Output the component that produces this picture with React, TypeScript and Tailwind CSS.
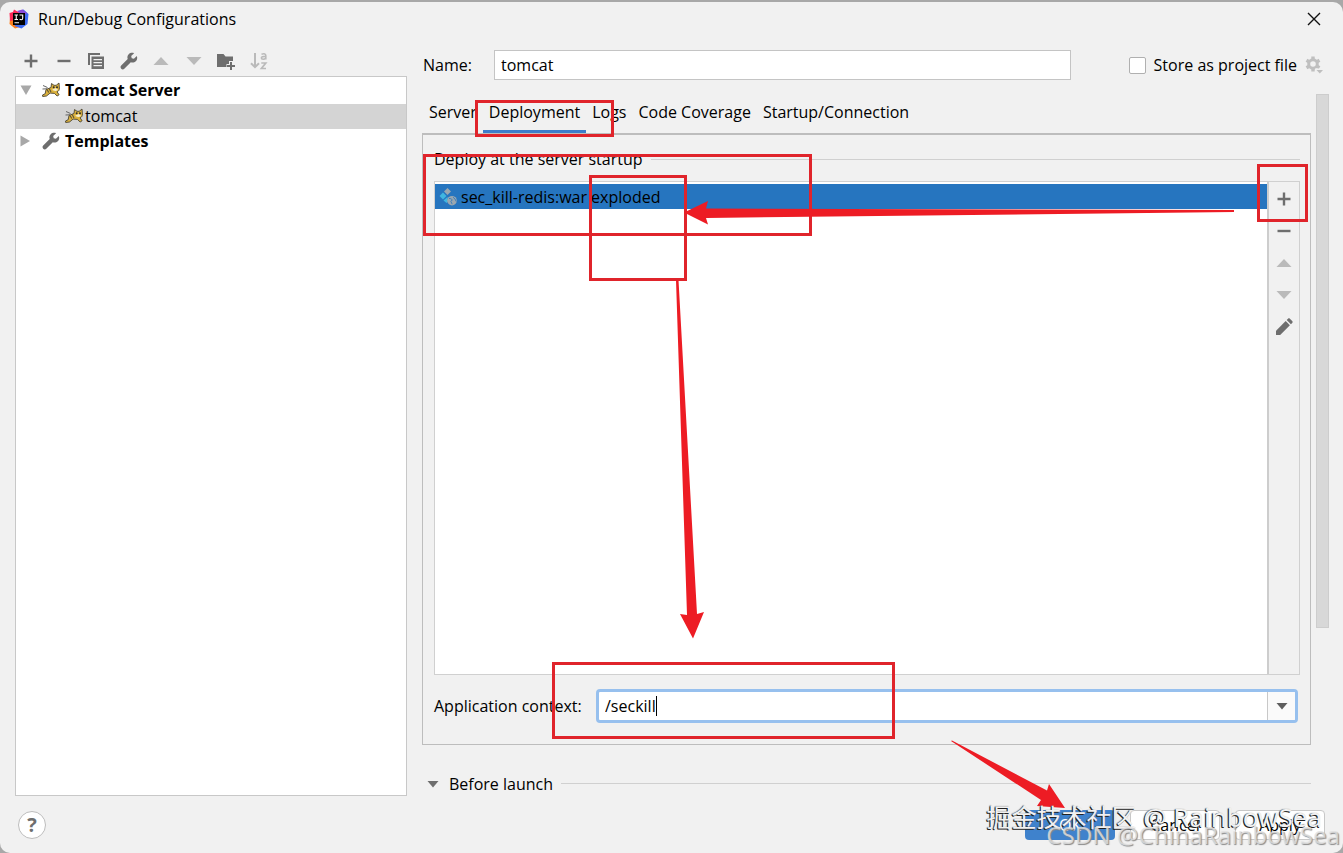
import type { ReactNode } from "react";

const font = "font-['Open_Sans','Noto_Sans_CJK_SC',sans-serif]";

interface IconProps {
  className?: string;
}

function PlusIcon() {
  return (
    <svg width="16" height="16" viewBox="0 0 16 16" className="text-[#6e6e6e]">
      <path d="M8 1.500v13M1.500 8h13" stroke="currentColor" strokeWidth="2.4" />
    </svg>
  );
}

function MinusIcon() {
  return (
    <svg width="16" height="16" viewBox="0 0 16 16" className="text-[#6e6e6e]">
      <path d="M1.500 8h13" stroke="currentColor" strokeWidth="2.4" />
    </svg>
  );
}

function CopyIcon() {
  return (
    <svg width="18" height="18" viewBox="0 0 18 18" fill="#6e6e6e">
      <path d="M1 1h12v2H3v10H1z" />
      <path fillRule="evenodd" d="M4.500 4.500H17V17H4.500zM6.500 7v1.300h8.500V7zm0 3v1.300h8.500V10zm0 3v1.300h8.500V13z" />
    </svg>
  );
}

function WrenchIcon() {
  return (
    <svg width="18" height="18" viewBox="0 0 18 18">
      <path
        fill="#6e6e6e"
        d="M16.800 3.900 13.900 6.800 11.700 6.300 11.200 4.100 14.100 1.200C12.300.400 10.100.800 8.700 2.200 7.400 3.500 7.100 5.400 7.700 7.100L1.200 13.600C.300 14.500.300 15.800 1.200 16.700 2.100 17.600 3.500 17.600 4.300 16.700L10.800 10.200C12.500 10.900 14.500 10.600 15.800 9.200 17.200 7.900 17.600 5.700 16.800 3.900Z"
      />
    </svg>
  );
}

function UpIcon() {
  return (
    <svg width="16" height="16" viewBox="0 0 16 16">
      <path d="M8 4l7.500 8H.500z" fill="#bababa" />
    </svg>
  );
}

function DownIcon() {
  return (
    <svg width="16" height="16" viewBox="0 0 16 16">
      <path d="M8 12 .500 4h15z" fill="#bababa" />
    </svg>
  );
}

function FolderAddIcon() {
  return (
    <svg width="20" height="18" viewBox="0 0 20 18" fill="#6e6e6e">
      <path d="M1 2h6.500L9.500 4.500H17V9h-4v3h-2.500v3H1z" />
      <path d="M14 10h2v3h3v2h-3v3h-2v-3h-3v-2h3z" />
    </svg>
  );
}

function SortIcon() {
  return (
    <svg width="18" height="18" viewBox="0 0 18 18" fill="none" stroke="#bababa" strokeWidth="2">
      <path d="M5 1v14M1 11.200l4 4 4-4" />
      <path d="M11.500 2.200c3-.9 4.300-.2 4.300 1.500V7.500M15.800 4.400c-3-.1-4.400.3-4.400 1.600 0 1.600 3 1.700 4.400 0" strokeWidth="1.600" />
      <path d="M11.300 11h4.500l-4.400 5.500H16" strokeWidth="1.700" />
    </svg>
  );
}

function PencilIcon() {
  return (
    <svg width="18" height="18" viewBox="0 0 18 18" fill="#6e6e6e">
      <path d="M1 17v-4.200L10.700 3.100l4.200 4.200L5.200 17z" />
      <path d="M11.700 2.100 13 .800c.6-.6 1.300-.6 1.900 0l2.300 2.300c.6.600.6 1.300 0 1.900l-1.300 1.300z" />
    </svg>
  );
}

function GearIcon() {
  return (
    <svg width="18" height="18" viewBox="0 0 18 18">
      <circle cx="8" cy="8" r="4.300" fill="none" stroke="#bfbfbf" strokeWidth="3" />
      <path
        d="M8 .500v3M8 12.500v3M1.500 4.250l2.600 1.500M11.900 10.250l2.600 1.500M1.500 11.750l2.600-1.500M11.900 5.750l2.600-1.500"
        stroke="#bfbfbf"
        strokeWidth="3.4"
      />
      <path d="M10 12.500h8v2l-3.500 3.500-4.500-3.500z" fill="#f1f1f1" />
      <path d="M11.500 14H18l-3.200 3.500z" fill="#bfbfbf" />
    </svg>
  );
}

function TomcatIcon() {
  return (
    <svg width="18" height="16" viewBox="0 0 18 16">
      <path d="M1 3.500 5.500 5.500M.500 7 5 6.800" stroke="#666" strokeWidth="1" />
      <path
        d="M4 7.500 9 5.500 9.500 1.500 12 3.300h2.200L17 1l.4 5c.1 2-.9 3.300-2.300 3.800l2 3-2 1.200-2.700-2.600-4.300-.3-3.600 2.900L.700 14.500.500 13l2.700-1.300z"
        fill="#dcb23c"
        stroke="#4b4433"
        strokeWidth=".9"
      />
      <path d="M10.300 7.500c1 1.800 4 2 5.700.2l-2-1.700z" fill="#f5ecc8" />
      <path d="M5 7.500 6.800 10.500M7.200 6.500 9 10" stroke="#5b5136" strokeWidth="1.100" />
      <circle cx="11.700" cy="5.300" r="1" fill="#2b2b2b" />
      <circle cx="15" cy="5.300" r="1" fill="#2b2b2b" />
    </svg>
  );
}

function ArtifactIcon() {
  return (
    <svg width="18" height="18" viewBox="0 0 18 18">
      <path d="M8.500 0 12 3.500 8.500 7 5 3.500z" fill="#9aa7b0" />
      <path d="M4 4.500 7.500 8 4 11.500.500 8z" fill="#40b6e0" />
      <path d="M8.500 9 9 13.500 7.500 15 4.500 12.500z" fill="#40b6e0" />
      <circle cx="13" cy="12.700" r="4.800" fill="#9aa7b0" />
      <path d="M10 10.500c1.800-.2 2.200.6 3.300 1.300l-1.400 1.600 1.300 2.800M14 9.200l2 1.800 1.200 2.500" fill="none" stroke="#2675bf" strokeWidth=".8" />
    </svg>
  );
}

function IdeaLogo() {
  return (
    <svg width="20" height="20" viewBox="0 0 20 20">
      <path d="M1 9 8 8l3 10-5 1.500L.500 15z" fill="#fc801d" />
      <path d="M.500 4 4 3l1-2.500 6 3.500-5 7-5 1z" fill="#fe2857" />
      <path d="M10 2 14.500.500 19.500 5l-1 10-6 4.500-7-2.500L12 8z" fill="#3d6bf2" />
      <path d="M8 2 13.500.500 18 4l-4 3z" fill="#8a4bd8" />
      <rect x="4" y="4" width="12" height="12" fill="#000" />
      <path d="M5.500 6h3.500M7.250 6v4.500M5.500 10.500h3.500M10.500 6h3.200v3.300c0 1-.6 1.400-1.400 1.400-.8 0-1.300-.2-1.700-.6M5.500 13.800h4.500" fill="none" stroke="#fff" strokeWidth="1.100" />
    </svg>
  );
}

function Caret({ className = "" }: IconProps) {
  return (
    <svg width="12" height="8" viewBox="0 0 12 8" className={className}>
      <path d="M.500 1h11L6 7.500z" fill="currentColor" />
    </svg>
  );
}

function TreeCaret({ className = "" }: IconProps) {
  return (
    <svg width="12" height="12" viewBox="0 0 12 12" className={className}>
      <path d="M.500 1.500h11L6 11z" fill="#a8a8a8" />
    </svg>
  );
}

interface ToolButtonProps {
  label: string;
  disabled?: boolean;
  children: ReactNode;
}

function ToolButton({ label, disabled, children }: ToolButtonProps) {
  return (
    <button
      type="button"
      aria-label={label}
      disabled={disabled}
      className="flex h-8 w-8 items-center justify-center"
    >
      {children}
    </button>
  );
}

function Sidebar() {
  return (
    <aside className="flex w-[392px] shrink-0 flex-col">
      <div className="flex h-8 items-center justify-between pt-0.5 pr-[132px]">
        <ToolButton label="Add"><PlusIcon /></ToolButton>
        <ToolButton label="Remove"><MinusIcon /></ToolButton>
        <ToolButton label="Copy"><CopyIcon /></ToolButton>
        <ToolButton label="Edit templates"><WrenchIcon /></ToolButton>
        <ToolButton label="Move up" disabled><UpIcon /></ToolButton>
        <ToolButton label="Move down" disabled><DownIcon /></ToolButton>
        <ToolButton label="Create folder"><FolderAddIcon /></ToolButton>
        <ToolButton label="Sort" disabled><SortIcon /></ToolButton>
      </div>

      <ul className="flex-1 border border-[#c8c8c8] bg-white pt-px leading-[22px]">
        <li className="flex h-[26px] items-center pb-0.5 pl-1 font-bold">
          <TreeCaret />
          <span className="w-2.5" />
          <TomcatIcon />
          <span className="pl-[5px]">Tomcat Server</span>
        </li>
        <li className="flex h-[25px] items-center bg-[#d4d4d4] pb-0.5 pl-[49px]">
          <TomcatIcon />
          <span className="pl-0.5">tomcat</span>
        </li>
        <li className="flex h-[25px] items-center pb-0.5 pl-[3px] font-bold">
          <TreeCaret className="-rotate-90" />
          <span className="w-[11px]" />
          <WrenchIcon />
          <span className="pl-[5px]">Templates</span>
        </li>
      </ul>
    </aside>
  );
}

const tabs = ["Server", "Deployment", "Logs", "Code Coverage", "Startup/Connection"];

function Tabs() {
  return (
    <div role="tablist" className="flex h-[39px] items-stretch pl-px">
      {tabs.map((tab) => (
        <button
          key={tab}
          type="button"
          role="tab"
          aria-selected={tab === "Deployment"}
          className={
            tab === "Deployment"
              ? "border-b-3 border-[#3d7dcb] px-1.5"
              : "border-b-3 border-transparent px-1.5"
          }
        >
          {tab}
        </button>
      ))}
    </div>
  );
}

function DeploymentPanel() {
  return (
    <section className="flex flex-1 flex-col border border-t-2 border-[#bdbdbd] pt-3 pr-2.5 pb-[21px] pl-[11px]">
      <div className="flex items-center gap-2">
        <h2>Deploy at the server startup</h2>
        <span className="h-px flex-1 bg-[#d0d0d0]" />
      </div>

      <div className="mt-2.5 flex flex-1 border border-[#d0d0d0]">
        <ul className="flex-1 border-r-2 border-[#cdcdcd] bg-white pt-0.5">
          <li className="flex h-[25px] items-center gap-1 bg-[#2675bf] pl-1">
            <ArtifactIcon />
            <span>sec_kill-redis:war exploded</span>
          </li>
        </ul>
        <div className="flex w-[30px] flex-col items-center pt-px">
          <ToolButton label="Add artifact"><PlusIcon /></ToolButton>
          <ToolButton label="Remove artifact"><MinusIcon /></ToolButton>
          <ToolButton label="Move artifact up" disabled><UpIcon /></ToolButton>
          <ToolButton label="Move artifact down" disabled><DownIcon /></ToolButton>
          <ToolButton label="Edit artifact"><PencilIcon /></ToolButton>
        </div>
      </div>

      <div className="mt-3.5 flex items-center">
        <label htmlFor="context" className="w-[162px]">Application context:</label>
        <div className="mr-0.5 flex h-[34px] flex-1 items-stretch overflow-hidden rounded border-3 border-[#97c0ee] bg-white">
          <div className="flex flex-1 items-center pl-1.5">
            <input
              id="context"
              defaultValue="/seckill"
              className="field-sizing-content outline-none"
            />
            <span className="h-5 w-px bg-black" />
          </div>
          <button
            type="button"
            aria-label="Show contexts"
            className="flex w-7 items-center justify-center border-l border-[#c8c8c8] bg-[#fafafa]"
          >
            <Caret className="text-[#5e5e5e]" />
          </button>
        </div>
      </div>
    </section>
  );
}

function Annotations() {
  return (
    <svg
      width="1343"
      height="853"
      viewBox="0 0 1343 853"
      className="pointer-events-none absolute top-0 left-0"
    >
      <g fill="none" stroke="#e0242b" strokeWidth="3">
        <rect x="476.500" y="101.500" width="136" height="34" />
        <rect x="424.500" y="155.500" width="386" height="79" />
        <rect x="590.500" y="176.500" width="95" height="103" />
        <rect x="1258.500" y="165.500" width="48" height="55" />
        <rect x="553.500" y="663.500" width="340" height="74" />
      </g>
      <g fill="#ed1c24">
        <path d="M684 212.500 708 201 706 208.500 1234 210v2L706 218l2 6.500z" />
        <path d="M676 280h2.500L697 614l7-2-11 26.500-13-24.500 7 1z" />
        <path d="M951 741l1-.5L1047 790.500 1049 784 1065 808 1037 806 1041 800z" />
      </g>
    </svg>
  );
}

function Watermarks() {
  return (
    <div className="pointer-events-none absolute right-0 bottom-0 flex flex-col items-end whitespace-nowrap">
      <p className="pr-[21px] font-['Noto_Sans','Noto_Sans_CJK_SC',sans-serif] text-[26px] leading-10 text-[#f1f1f1] [text-shadow:-1px_1px_0_#222,-1px_0_1px_#555]">
        <span className="text-[25px]">掘金技术社区</span> @ RainbowSea
      </p>
      <p className="-mt-5 pr-[3px] font-['Noto_Sans',sans-serif] text-[24px] leading-9 text-[#e2e2e2]/80 [text-shadow:1px_1px_1px_#8a8a8a]">
        CSDN @ChinaRainbowSea
      </p>
    </div>
  );
}

export default function App() {
  return (
    <div className={`${font} relative flex min-h-screen flex-col bg-[#a8a8a8] pt-0.5 text-[16px] leading-6 text-black`}>
      <div className="flex flex-1 flex-col rounded-[10px] bg-[#f1f1f1]">
        <header className="flex h-[34px] items-center gap-[9px] pr-[19px] pl-[9px]">
          <IdeaLogo />
          <h1 className="flex-1">Run/Debug Configurations</h1>
          <button type="button" aria-label="Close" className="flex h-5 w-5 items-center justify-center">
            <svg width="14" height="14" viewBox="0 0 14 14">
              <path d="M1 1l12 12M13 1 1 13" stroke="#111" strokeWidth="1.400" />
            </svg>
          </button>
        </header>

        <main className="flex flex-1 gap-[15px] pt-2 pr-3.5 pl-[15px]">
          <Sidebar />

          <div className="flex flex-1 flex-col pt-1.5">
            <div className="flex items-center pr-1.5 pl-px">
              <label htmlFor="name" className="w-[71px]">Name:</label>
              <input
                id="name"
                defaultValue="tomcat"
                className="h-[30px] min-w-0 flex-1 border border-[#c4c4c4] bg-white px-1.5 outline-none"
              />
              <label className="ml-[58px] flex items-center gap-2">
                <input
                  type="checkbox"
                  className="h-[17px] w-[17px] appearance-none rounded-xs border border-[#b0b0b0] bg-white"
                />
                Store as project file
              </label>
              <button type="button" aria-label="Storage settings" className="ml-2">
                <GearIcon />
              </button>
            </div>

            <div className="mt-3.5 flex flex-1 gap-[5px]">
              <div className="flex flex-1 flex-col">
                <Tabs />
                <DeploymentPanel />
                <div className="flex h-[51px] items-center pt-[26px]">
                  <Caret className="ml-[5px] text-[#6e6e6e]" />
                  <span className="pl-2.5">Before launch</span>
                  <span className="ml-2 h-px flex-1 bg-[#d0d0d0]" />
                </div>
              </div>
              <div className="h-[76%] w-[13px] border border-[#cdcdcd] bg-[#d8d8d8]" />
            </div>
          </div>
        </main>

        <footer className="flex h-[57px] items-center gap-[15px] pr-[18px] pl-[18px]">
          <button
            type="button"
            aria-label="Help"
            className="mr-auto flex h-7 w-7 items-center justify-center rounded-full border border-[#bdbdbd] bg-white text-[20px] font-bold text-[#6e6e6e]"
          >
            ?
          </button>
          <button type="button" className="h-[30px] w-[90px] rounded bg-[#3f82cc] text-white">OK</button>
          <button type="button" className="h-[30px] w-[90px] rounded border border-[#c8c8c8] bg-white">Cancel</button>
          <button type="button" className="h-[30px] w-[90px] rounded border border-[#c8c8c8] bg-white">Apply</button>
        </footer>
      </div>

      <Annotations />
      <Watermarks />
    </div>
  );
}
